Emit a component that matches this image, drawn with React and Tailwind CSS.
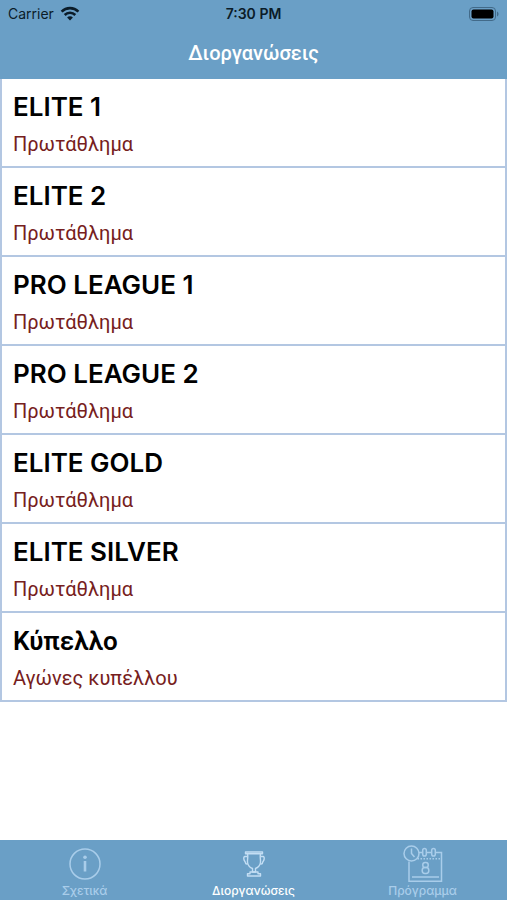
const competitions = [
  { name: 'ELITE 1', kind: 'Πρωτάθλημα' },
  { name: 'ELITE 2', kind: 'Πρωτάθλημα' },
  { name: 'PRO LEAGUE 1', kind: 'Πρωτάθλημα' },
  { name: 'PRO LEAGUE 2', kind: 'Πρωτάθλημα' },
  { name: 'ELITE GOLD', kind: 'Πρωτάθλημα' },
  { name: 'ELITE SILVER', kind: 'Πρωτάθλημα' },
  { name: 'Κύπελλο', kind: 'Αγώνες κυπέλλου', greek: true }
];

function WifiIcon() {
  return (
    <svg className="w-5 h-4" viewBox="0 0 20 16" fill="none" stroke="currentColor" strokeWidth="2.6" aria-hidden="true">
      <path d="M1.6 5.6a12 12 0 0 1 16.8 0" />
      <path d="M4.7 9a7.5 7.5 0 0 1 10.6 0" />
      <path d="M10 14.5l-2.9-3a4 4 0 0 1 5.8 0z" fill="currentColor" stroke="none" />
    </svg>
  );
}

function BatteryIcon() {
  return (
    <svg className="w-[30px] h-[14px]" viewBox="0 0 30 14" aria-hidden="true">
      <rect x="0.5" y="0.5" width="26" height="13" rx="3.5" fill="none" stroke="#426a89" />
      <rect x="2.5" y="2.5" width="22" height="9" rx="2" fill="#000" />
      <path d="M28 4.5c2 .8 2 4.2 0 5z" fill="#426a89" />
    </svg>
  );
}

function InfoIcon() {
  return (
    <svg className="w-8 h-8" viewBox="0 0 32 32" fill="none" stroke="currentColor" aria-hidden="true">
      <circle cx="16" cy="16" r="15" strokeWidth="1.5" />
      <path d="M16 13v10.5" strokeWidth="2.6" />
      <circle cx="16" cy="9.2" r="1.8" fill="currentColor" stroke="none" />
    </svg>
  );
}

function TrophyIcon() {
  return (
    <svg className="w-[22px] h-[26px]" viewBox="0 0 22 26" fill="none" stroke="currentColor" strokeWidth="1.4" strokeLinejoin="round" aria-hidden="true">
      <path d="M2.5 1h17v1.8h-17z" />
      <path d="M4.5 3c.8 3-.2 5 0 8 .2 3.500 2.500 5.500 5 6.500V21h3v-3.500c2.500-1 4.800-3 5-6.500.2-3-.8-5 0-8" />
      <path d="M4.500 5.500H2C.9 5.500.7 6.500.8 7.800c.3 2.200 1.500 2.700 1.800 4.200.2 1 1.100 1.200 2 .9" />
      <path d="M17.500 5.500H20c1.100 0 1.300 1 1.200 2.300-.3 2.200-1.500 2.700-1.800 4.200-.2 1-1.100 1.200-2 .9" />
      <path d="M7 21h8v1.700h2.500V25h-13v-2.300H7z" />
    </svg>
  );
}

function CalendarIcon() {
  return (
    <svg className="w-10 h-[38px]" viewBox="0 0 40 38" fill="none" stroke="currentColor" strokeWidth="1.5" aria-hidden="true">
      <circle cx="8.5" cy="8.5" r="7.5" />
      <path d="M8.5 3.5v5l3 3.5" />
      <path d="M16 7.5h3.5M23.5 7.5h5M32.5 7.5h6v28.7H6V16.5" />
      <rect x="19.7" y="3.500" width="3.600" height="7.500" rx="1.800" />
      <rect x="28.700" y="3.500" width="3.600" height="7.500" rx="1.800" />
      <path d="M14.500 13.800H38" strokeDasharray="1.500 1.500" />
      <path d="M9 32h27" />
      <rect x="19.800" y="17.500" width="5.400" height="5" rx="2.300" />
      <rect x="19.200" y="22.500" width="6.600" height="6" rx="2.700" />
    </svg>
  );
}

const tabs = [
  { label: 'Σχετικά', Icon: InfoIcon },
  { label: 'Διοργανώσεις', Icon: TrophyIcon, active: true },
  { label: 'Πρόγραμμα', Icon: CalendarIcon }
];

function StatusBar() {
  return (
    <div className="grid grid-cols-3 items-center h-[27px] px-2 text-sm text-[#0b1c29]">
      <div className="flex items-center gap-1.5">
        <span>Carrier</span>
        <WifiIcon />
      </div>
      <span className="text-center font-semibold">7:30 PM</span>
      <div className="flex justify-end">
        <BatteryIcon />
      </div>
    </div>
  );
}

function App() {
  return (
    <div className="min-h-screen flex flex-col bg-white font-['Inter','Roboto',sans-serif]">
      <header className="bg-[#6a9fc6]">
        <StatusBar />
        <h1 className="h-[52px] leading-[52px] text-center text-xl font-medium text-white font-['Roboto',sans-serif]">Διοργανώσεις</h1>
      </header>

      <main className="flex-1">
        <ul className="border-x-2 border-[#b3c7e2]">
          {competitions.map(({ name, kind, greek }) => (
            <li key={name} className="border-b-2 border-[#b3c7e2]">
              <button type="button" className="block w-full px-[11px] pt-3 pb-2 text-left">
                <span className={`block text-[26px] leading-8 font-semibold text-black ${greek ? "font-['Roboto',sans-serif]" : ''}`}>
                  {name}
                </span>
                <span className="block mt-2 text-xl leading-[27px] text-[#762020] font-['Roboto',sans-serif]">{kind}</span>
              </button>
            </li>
          ))}
        </ul>
      </main>

      <nav className="grid grid-cols-3 h-[60px] bg-[#6a9fc6]">
        {tabs.map(({ label, Icon, active }) => (
          <button
            key={label}
            type="button"
            aria-current={active ? 'page' : undefined}
            className={`flex flex-col items-center text-xs font-medium ${active ? 'text-white' : 'text-[#a9cdea]'}`}
          >
            <span className={`flex h-[43px] pt-1 items-center ${active ? 'text-[#c3def4]' : ''}`}>
              <Icon />
            </span>
            <span className="leading-4">{label}</span>
          </button>
        ))}
      </nav>
    </div>
  );
}

export default App;
